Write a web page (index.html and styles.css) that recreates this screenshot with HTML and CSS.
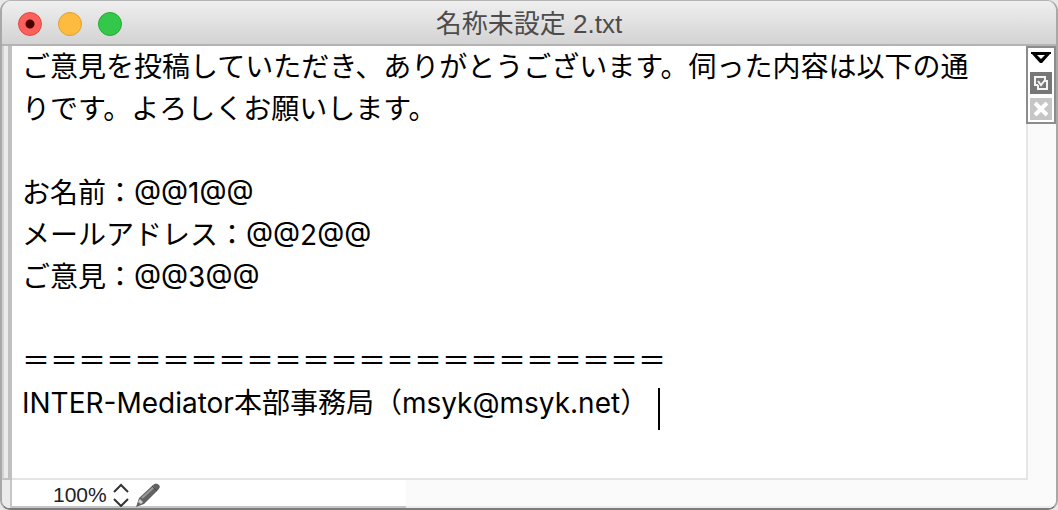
FILE: index.html
```html
<!DOCTYPE html>
<html lang="ja">
<head>
<meta charset="utf-8">
<title>名称未設定 2.txt</title>
<link rel="stylesheet" href="styles.css">
</head>
<body>
<div class="window">
  <header class="titlebar">
    <div class="lights">
      <button class="light light-close" type="button" aria-label="閉じる"></button>
      <button class="light light-min" type="button" aria-label="しまう"></button>
      <button class="light light-max" type="button" aria-label="拡大"></button>
    </div>
    <h1 class="title">名称未設定 2.txt</h1>
  </header>
  <div class="body">
    <div class="gutter"></div>
    <main class="page">
      <textarea class="editor" aria-label="本文" spellcheck="false">ご意見を投稿していただき、ありがとうございます。伺った内容は以下の通りです。よろしくお願いします。

お名前：@@1@@
メールアドレス：@@2@@
ご意見：@@3@@

＝＝＝＝＝＝＝＝＝＝＝＝＝＝＝＝＝＝＝＝＝＝＝
INTER-Mediator本部事務局（msyk@msyk.net）</textarea>
      <span class="caret"></span>
    </main>
    <aside class="side">
      <div class="tools">
        <button class="tool tool-menu" type="button" aria-label="メニュー"><svg width="22" height="20" viewBox="0 0 22 20"><path d="M1 4H21V6H20L12 15H10L2 6H1Z" fill="#000"/><path d="M7 7H15L11 11Z" fill="#fff"/></svg></button>
        <button class="tool tool-dark" type="button" aria-label="リンク"><svg width="22" height="22" viewBox="0 0 22 22" fill="none" stroke="#f4f4f4" stroke-width="2"><path d="M8 13H5V5H15V8"/><path d="M14 9H17V17H8V13"/><path d="M8 9L11 13L15 8"/></svg></button>
        <button class="tool tool-pale" type="button" aria-label="閉じる"><svg width="22" height="22" viewBox="0 0 22 22" stroke="#fff" stroke-width="4"><path d="M5 5L17 17M17 5L5 17"/></svg></button>
      </div>
    </aside>
  </div>
  <footer class="footer">
    <div class="corner"></div>
    <div class="status">
      <button class="zoom" type="button">100%<svg width="16" height="24" viewBox="0 0 16 24" fill="none" stroke="#333" stroke-width="2"><path d="M1 9L8 2L15 9M1 16L8 23L15 16"/></svg></button>
      <button class="pen" type="button" aria-label="編集"><svg width="26" height="26" viewBox="0 0 26 26"><path d="M1 25L4 16L18 3Q21 0 24 3Q26 5 23 8L9 22Z" fill="#626262"/><path d="M7 16L19 5" stroke="#999" stroke-width="2"/><path d="M3 20L5 17L8 20L6 22Z" fill="#ccc"/><path d="M17 4L22 9" stroke="#444" stroke-width="1"/></svg></button>
    </div>
    <div class="track"></div>
  </footer>
</div>
</body>
</html>
```
FILE: styles.css
```css
* { box-sizing: border-box; }
html, body { height: 100%; }
body {
  margin: 0;
  background: #e8e8e8;
  font-family: "Noto Sans CJK JP", sans-serif;
}
button {
  margin: 0;
  padding: 0;
  border: 0;
  background: none;
  color: inherit;
  font: inherit;
}
svg { display: block; }
.window {
  display: flex;
  flex-direction: column;
  height: 100%;
  border: 2px solid #a8a8a8;
  border-top: 1px solid #b4b4b4;
  border-bottom-color: #7c7c7c;
  border-radius: 11px 11px 10px 10px;
  overflow: hidden;
  background: #fafafa;
}
.titlebar {
  display: grid;
  grid-template-columns: 1fr auto 1fr;
  align-items: center;
  flex: none;
  height: 45px;
  padding: 2px 16px 0;
  border-bottom: 2px solid #b4b4b4;
  background: linear-gradient(#efefef, #d3d3d3);
}
.lights { display: flex; gap: 16px; }
.light {
  width: 24px;
  height: 24px;
  border: 1px solid #e2463f;
  border-radius: 50%;
}
.light-close { background: radial-gradient(circle, #4d0000 4px, #fc605c 5px); }
.light-min { border-color: #dfa034; background: #fdbc40; }
.light-max { border-color: #27aa35; background: #34c84a; }
.title {
  margin: 0;
  color: #4c4c4c;
  font: 400 26px/40px "Liberation Sans", "Noto Sans CJK JP", sans-serif;
}
.body { display: flex; flex: 1; min-height: 0; }
.gutter {
  flex: none;
  width: 10px;
  border-left: 2px solid #d2d2d2;
  border-right: 4px solid #c0c0c0;
  border-bottom: 2px solid #c0c0c0;
  background: #ebebeb;
}
.page {
  position: relative;
  display: flex;
  flex: 1;
  border-right: 2px solid #e6e6e6;
  border-bottom: 2px solid #e4e4e4;
  background: #fff;
}
.editor {
  flex: 1;
  margin: 0;
  padding: 0 40px 0 10px;
  border: 0;
  outline: 0;
  resize: none;
  overflow: hidden;
  background: transparent;
  color: #000;
  font: 400 28px/42px Inter, "Noto Sans CJK JP", sans-serif;
}
.caret {
  position: absolute;
  left: 646px;
  top: 342px;
  width: 2px;
  height: 42px;
  background: #000;
}
.side { flex: none; width: 28px; }
.tools {
  display: flex;
  flex-direction: column;
  align-items: center;
  gap: 4px;
  margin-left: -2px;
  position: relative;
  padding: 0 0 2px;
  border: 2px solid #8c8c8c;
  background: #fff;
}
.tool { width: 22px; height: 22px; }
.tool-menu { height: 20px; }
.tool-dark { background: #777; }
.tool-pale { background: #c6c6c6; }
.footer { display: flex; flex: none; height: 28px; }
.corner {
  flex: none;
  width: 10px;
  border-right: 2px solid #c6c6c6;
  background: #ebebeb;
}
.status {
  display: flex;
  align-items: center;
  gap: 6px;
  width: 394px;
  padding: 4px 0 0 41px;
  border-bottom: 2px solid #c4c4c4;
  background: #fff;
}
.zoom {
  display: flex;
  align-items: center;
  gap: 6px;
  color: #222;
  font: 400 21px/26px "Liberation Sans", sans-serif;
}
.track { flex: 1; border-bottom: 2px solid #ececec; background: #fafafa; }
```
